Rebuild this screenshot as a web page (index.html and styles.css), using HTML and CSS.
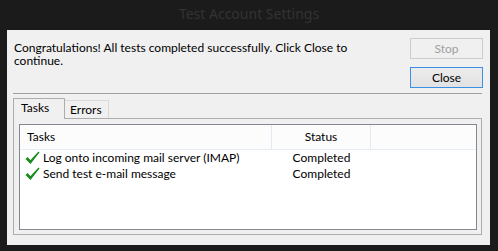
FILE: index.html
```html
<!DOCTYPE html>
<html>
<head>
<meta charset="utf-8">
<link rel="stylesheet" href="styles.css">
</head>
<body>
<div class="titlebar">Test Account Settings</div>
<div class="window">
  <div class="top">
    <p class="msg"><span class="line">Congratulations! All tests completed successfully. Click Close to</span><span class="line">continue.</span></p>
    <div class="buttons">
      <div class="btn disabled">Stop</div>
      <div class="btn default">Close</div>
    </div>
  </div>
  <div class="sep"></div>
  <div class="tabs">
    <div class="tabstrip">
      <div class="tab selected">Tasks</div>
      <div class="tab">Errors</div>
    </div>
    <div class="panel">
      <div class="list">
        <div class="lhead">
          <div class="c1">Tasks</div>
          <div class="c2">Status</div>
          <div class="c3"></div>
        </div>
        <div class="row">
          <div class="c1"><svg class="check" width="15" height="14" viewBox="0 0 15 14"><path d="M0.5 8 L2.5 6 L5.5 9 L13.5 0.5 L14.5 1.5 L5.5 13 Z" fill="#1b8c1b"/></svg><span>Log onto incoming mail server (IMAP)</span></div>
          <div class="c2">Completed</div>
          <div class="c3"></div>
        </div>
        <div class="row">
          <div class="c1"><svg class="check" width="15" height="14" viewBox="0 0 15 14"><path d="M0.5 8 L2.5 6 L5.5 9 L13.5 0.5 L14.5 1.5 L5.5 13 Z" fill="#1b8c1b"/></svg><span>Send test e-mail message</span></div>
          <div class="c2">Completed</div>
          <div class="c3"></div>
        </div>
      </div>
    </div>
  </div>
</div>
</body>
</html>
```

FILE: styles.css
```css
* { box-sizing: border-box; }
html, body {
  margin: 0;
  padding: 0;
  width: 498px;
  height: 251px;
  overflow: hidden;
  background: #1b1b1b;
  font-family: Lato, "Noto Sans", sans-serif;
  font-size: 12px;
  color: #000;
}
.titlebar {
  height: 30px;
  line-height: 27px;
  text-align: center;
  font-family: "Noto Sans", sans-serif;
  font-size: 14px;
  color: #333333;
}
.window {
  margin-left: 7px;
  width: 483px;
  height: 215px;
  background: #f0f0f0;
  display: flex;
  flex-direction: column;
}
.top {
  display: flex;
  justify-content: space-between;
  align-items: flex-start;
  padding: 8px 7px 0 7px;
}
.msg {
  margin: 0;
  padding-top: 3px;
  white-space: nowrap;
}
.msg .line {
  display: block;
  height: 13px;
  line-height: 13px;
}
.buttons {
  display: flex;
  flex-direction: column;
  gap: 8px;
}
.btn {
  width: 73px;
  height: 21px;
  line-height: 19px;
  text-align: center;
  border: 1px solid #adadad;
  background: #e1e1e1;
}
.btn.disabled {
  border-color: #cccccc;
  background: #f0f0f0;
  color: #a0a0a0;
}
.btn.default {
  border-color: #3c8fe6;
  background: linear-gradient(#ececec, #e2e2e2);
}
.sep {
  margin: 5px 8px 0 6px;
  height: 1px;
  background: #a0a0a0;
}
.tabs {
  margin: 4px 8px 0 6px;
}
.tabstrip {
  display: flex;
  align-items: flex-end;
  height: 20px;
}
.tab {
  height: 18px;
  line-height: 17px;
  padding: 0 6px 0 5px;
  border: 1px solid #d9d9d9;
  border-bottom: none;
  border-left: none;
  background: #f0f0f0;
}
.tab.selected {
  height: 21px;
  width: 52px;
  padding: 0 0 0 7px;
  line-height: 17px;
  border: 1px solid #adadad;
  border-bottom: none;
  margin-bottom: -1px;
  position: relative;
  z-index: 1;
  background: #f0f0f0;
}
.panel {
  border: 1px solid #adadad;
  height: 117px;
  padding: 5px 4px 4px 5px;
  background: #f0f0f0;
}
.list {
  height: 106px;
  border: 1px solid #828790;
  background: #ffffff;
}
.lhead {
  display: flex;
  height: 25px;
  border-bottom: 1px solid #e5ecf6;
  background: #fcfcfc;
  line-height: 24px;
}
.lhead .c1 { border-right: 1px solid #e3e8f1; }
.lhead .c2 { border-right: 1px solid #e3e8f1; }
.c1 {
  width: 252px;
  padding-left: 7px;
  display: flex;
  align-items: center;
}
.c2 {
  width: 99px;
  text-align: center;
}
.c3 { flex: 1; }
.row {
  display: flex;
  height: 16px;
  line-height: 16px;
}
.row .c1 { padding-left: 5px; }
.check {
  flex: none;
  margin-right: 3px;
}
```
